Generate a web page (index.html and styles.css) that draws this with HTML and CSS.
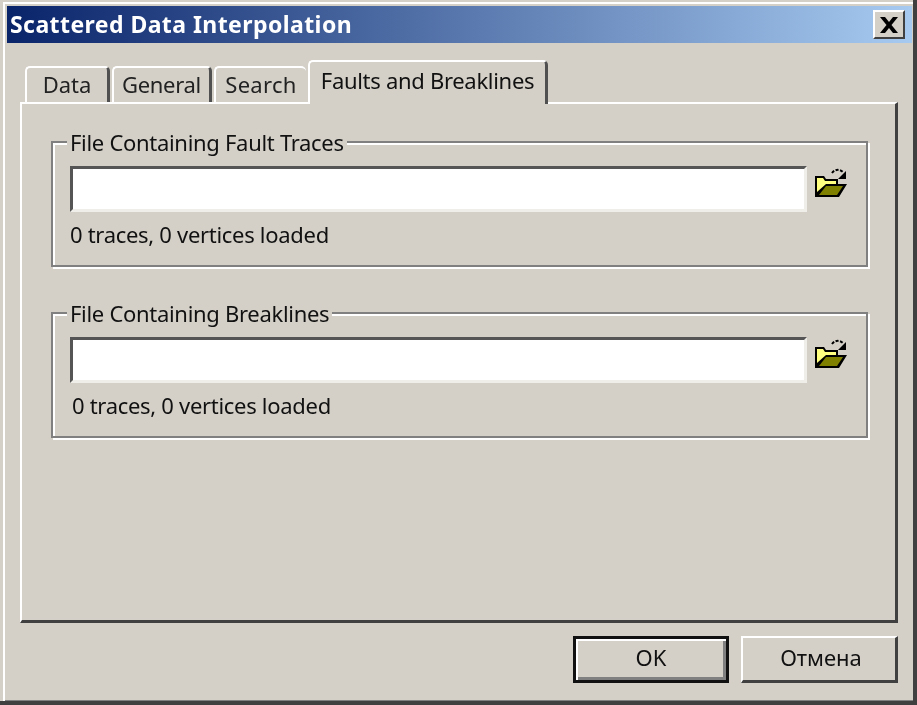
FILE: index.html
```html
<!DOCTYPE html>
<html lang="en">
<head>
<meta charset="utf-8">
<title>Scattered Data Interpolation</title>
<link rel="stylesheet" href="styles.css">
</head>
<body>
<div class="window">
  <div class="frame">
    <header class="titlebar">
      <span class="title">Scattered Data Interpolation</span>
      <button class="close" aria-label="Close">
        <svg width="20" height="16" viewBox="0 0 20 16"><path d="M1 0h5l4 5 4-5h5l-6.500 8 6.500 8h-5l-4-5-4 5h-5l6.500-8z" fill="#000"/></svg>
      </button>
    </header>
    <div class="content">
      <nav class="tabs">
        <div class="tab tab-data">Data</div>
        <div class="tab tab-general">General</div>
        <div class="tab tab-search">Search</div>
        <div class="tab tab-active">Faults and Breaklines</div>
      </nav>
      <main class="panel">
        <section class="group">
          <div class="legend">File Containing Fault Traces</div>
          <div class="file-row">
            <input class="field" type="text">
            <svg class="folder" width="32" height="30" viewBox="0 0 32 30">
              <path d="M17 5c3-4 8-4 11-1" fill="none" stroke="#000" stroke-width="2" stroke-dasharray="3 1.500"/>
              <path d="M31 3v8h-8z" fill="#000"/>
              <path d="M0 8h9l2 3h12v5h9l-8 13H0z" fill="#000"/>
              <path d="M2 10h6l2 3h11v3H11L2 24z" fill="#ffff80"/>
              <path d="M11 18h17l-6 9H4z" fill="#808000"/>
            </svg>
          </div>
          <div class="status">0 traces, 0 vertices loaded</div>
        </section>
        <section class="group group-second">
          <div class="legend">File Containing Breaklines</div>
          <div class="file-row">
            <input class="field" type="text">
            <svg class="folder" width="32" height="30" viewBox="0 0 32 30">
              <path d="M17 5c3-4 8-4 11-1" fill="none" stroke="#000" stroke-width="2" stroke-dasharray="3 1.500"/>
              <path d="M31 3v8h-8z" fill="#000"/>
              <path d="M0 8h9l2 3h12v5h9l-8 13H0z" fill="#000"/>
              <path d="M2 10h6l2 3h11v3H11L2 24z" fill="#ffff80"/>
              <path d="M11 18h17l-6 9H4z" fill="#808000"/>
            </svg>
          </div>
          <div class="status status-shift">0 traces, 0 vertices loaded</div>
        </section>
      </main>
      <footer class="actions">
        <button class="btn btn-default">OK</button>
        <button class="btn btn-cancel">Отмена</button>
      </footer>
    </div>
  </div>
</div>
</body>
</html>
```

FILE: styles.css
```css
* { box-sizing: border-box; }
html, body { margin: 0; padding: 0; }
body {
  background: #d4d0c8;
  font-family: "Noto Sans", "DejaVu Sans", sans-serif;
  font-size: 22px;
  letter-spacing: -0.3px;
  color: #111;
}
.window {
  width: 917px;
  height: 705px;
  background: #d4d0c8;
  border-right: 4px solid #404040;
  border-bottom: 4px solid #404040;
  overflow: hidden;
  filter: blur(0.4px);
}
.frame {
  margin: 2px 0 0 3px;
  height: 699px;
  border-top: 2px solid #fff;
  border-left: 2px solid #fff;
  box-shadow: inset 0 -1px #808080;
}
.titlebar {
  margin: 2px 1px 0 2px;
  height: 37px;
  padding: 0 7px 0 3px;
  display: flex;
  align-items: center;
  justify-content: space-between;
  background: linear-gradient(90deg, #0a246a, #a6caf0);
}
.title {
  color: #fff;
  font-weight: 700;
  font-size: 23px;
  letter-spacing: 0.43px;
  line-height: 37px;
}
.close {
  width: 32px;
  height: 29px;
  padding: 0;
  display: flex;
  align-items: center;
  justify-content: center;
  background: #d4d0c8;
  border: 0;
  border-top: 2px solid #fff;
  border-left: 2px solid #fff;
  border-right: 2px solid #404040;
  border-bottom: 2px solid #404040;
}
.content {
  padding: 17px 15px 0;
}
.tabs {
  display: flex;
  align-items: flex-end;
  gap: 2px;
  padding-left: 5px;
  margin-bottom: -2px;
  position: relative;
  z-index: 1;
}
.tab {
  height: 36px;
  margin-bottom: 2px;
  background: #d4d0c8;
  border-top: 2px solid #fff;
  border-left: 2px solid #fff;
  border-right: 3px solid #505050;
  border-radius: 5px 5px 0 0;
  line-height: 32px;
  text-align: center;
  color: #222;
}
.tab-data { width: 85px; letter-spacing: 0; }
.tab-general { width: 100px; }
.tab-search { width: 92px; border-right: 0; letter-spacing: 0.3px; }
.tab-active {
  width: 240px;
  height: 44px;
  margin-bottom: 0;
  line-height: 36px;
  color: #111;
}
.panel {
  height: 521px;
  padding: 37px 27px 0 29px;
  border-top: 2px solid #fff;
  border-left: 2px solid #fff;
  border-right: 3px solid #404040;
  border-bottom: 3px solid #404040;
}
.group {
  width: 817px;
  height: 126px;
  padding: 0 19px 0 17px;
  display: flex;
  flex-direction: column;
  align-items: flex-start;
  border: 2px solid #808080;
  box-shadow: inset 2px 2px #fff, 2px 2px #fff;
}
.group-second { margin-top: 45px; }
.legend {
  margin: -15px 0 10px -3px;
  padding: 0 3px;
  height: 28px;
  line-height: 28px;
  background: #d4d0c8;
  white-space: nowrap;
}
.file-row {
  display: flex;
  align-items: flex-start;
  gap: 8px;
  align-self: stretch;
}
.field {
  flex: 1;
  height: 46px;
  margin: 0;
  padding: 0;
  background: #fff;
  border: 3px solid;
  border-color: #555 #f0eee8 #f0eee8 #555;
  outline: 0;
}
.folder {
  flex: none;
  margin-top: 2px;
}
.status {
  margin-top: 8px;
  height: 28px;
  line-height: 28px;
  white-space: nowrap;
}
.status-shift { margin-left: 2px; }
.actions {
  display: flex;
  justify-content: flex-end;
  gap: 12px;
  margin-top: 13px;
}
.btn {
  height: 47px;
  padding: 0 0 5px;
  font: inherit;
  letter-spacing: 0;
  color: #111;
  background: #d4d0c8;
}
.btn-default {
  width: 156px;
  border: 3px solid #111;
  box-shadow: inset 2px 2px #fff, inset -3px -3px #808080;
}
.btn-cancel {
  width: 157px;
  padding-left: 4px;
  border: 0;
  border-top: 2px solid #fff;
  border-left: 2px solid #fff;
  border-right: 3px solid #404040;
  border-bottom: 3px solid #404040;
}
```
